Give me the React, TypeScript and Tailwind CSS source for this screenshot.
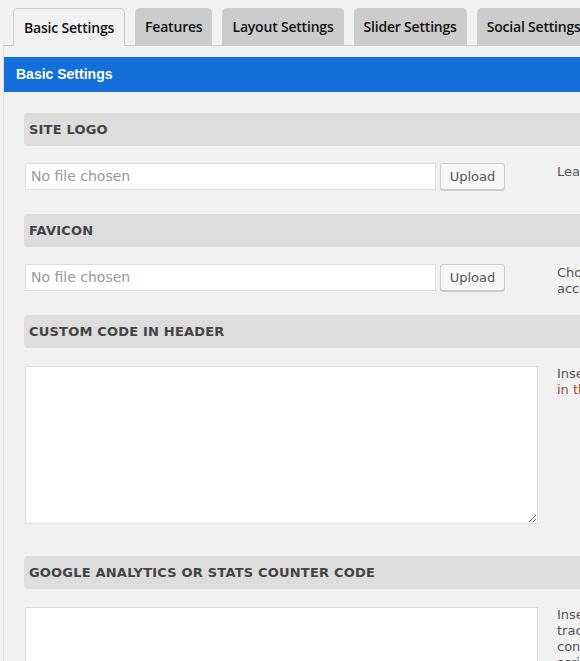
import React from "react";

const verdana = { fontFamily: '"DejaVu Sans", Verdana, sans-serif' };

function Header({ title }: { title: string }) {
  return (
    <div
      className="h-[33px] w-[600px] shrink-0 rounded-l-[4px] bg-[#dddddd] pl-[5px] flex items-center text-[13px] font-bold text-[#444] tracking-[0.2px]"
      style={verdana}
    >
      {title}
    </div>
  );
}

function FileRow({ desc }: { desc: React.ReactNode }) {
  return (
    <div className="flex items-start h-[27px] w-[800px]">
      <div
        className="ml-px w-[411px] shrink-0 h-[27px] bg-white border border-[#dddddd] flex items-center pl-[5px] text-[14px] text-[#999]"
        style={verdana}
      >
        No file chosen
      </div>
      <button
        className="ml-[4px] w-[65px] shrink-0 h-[27px] rounded-[3px] border border-[#cccccc] bg-[#f7f7f7] shadow-[0_1px_0_#ccc] text-[13px] text-[#555] flex items-center justify-center"
        style={verdana}
      >
        Upload
      </button>
      <div className="ml-[52px] w-[200px] pt-[1px] text-[13px] leading-[16px] text-[#555] shrink-0" style={verdana}>
        {desc}
      </div>
    </div>
  );
}

function TextRow({ desc }: { desc: React.ReactNode }) {
  return (
    <div className="flex items-start w-[800px]">
      <textarea className="ml-px w-[513px] h-[158px] bg-white border border-[#dddddd] resize-y shrink-0 outline-none" />
      <div className="ml-[19px] w-[200px] pt-0 text-[13px] leading-[16px] text-[#555] shrink-0" style={verdana}>
        {desc}
      </div>
    </div>
  );
}

export default function App() {
  const tabs = ["Basic Settings", "Features", "Layout Settings", "Slider Settings", "Social Settings"];
  return (
    <div className="w-[580px] h-[661px] overflow-hidden bg-[#f1f1f1] relative">
      <div className="pt-[8px] ml-[3px] pl-[10px] border-b border-[#cccccc] flex gap-[10px] w-[700px]">
        {tabs.map((t, i) => (
          <div
            key={t}
            className={
              "px-[10px] flex items-center rounded-t-[5px] text-[14px] font-semibold tracking-[-0.2px] text-[#111] whitespace-nowrap shrink-0 " +
              (i === 0
                ? "bg-[#f1f1f1] border border-b-0 border-[#cccccc] -mb-px h-[38px]"
                : "bg-[#cccccc] h-[37px]")
            }
            style={{ fontFamily: '"Open Sans", "Noto Sans", sans-serif' }}
          >
            {t}
          </div>
        ))}
      </div>
      <div className="ml-[3px] border-l border-[#dddddd] pt-[11px] h-[700px]">
        <div
          className="h-[35px] bg-[#136fd9] text-white font-bold text-[14px] pl-[12px] flex items-center w-[700px]"
          style={{ fontFamily: '"Liberation Sans", Arial, sans-serif' }}
        >
          Basic Settings
        </div>
        <div className="pl-[20px] pt-[21px] flex flex-col">
          <Header title="SITE LOGO" />
          <div className="mt-[17px]">
            <FileRow desc={<>Leave blank to use text</>} />
          </div>
          <div className="mt-[24px]">
            <Header title="FAVICON" />
          </div>
          <div className="mt-[17px]">
            <FileRow desc={<>Choose a favicon<br />according</>} />
          </div>
          <div className="mt-[24px]">
            <Header title="CUSTOM CODE IN HEADER" />
          </div>
          <div className="mt-[18px]">
            <TextRow
              desc={
                <>
                  Insert code
                  <br />
                  <span className="text-[#9b4a34]">in the head</span>
                </>
              }
            />
          </div>
          <div className="mt-[32px]">
            <Header title="GOOGLE ANALYTICS OR STATS COUNTER CODE" />
          </div>
          <div className="mt-[18px]">
            <TextRow
              desc={
                <>
                  Insert your
                  <br />
                  tracking
                  <br />
                  content
                  <br />
                  script
                </>
              }
            />
          </div>
        </div>
      </div>
    </div>
  );
}
